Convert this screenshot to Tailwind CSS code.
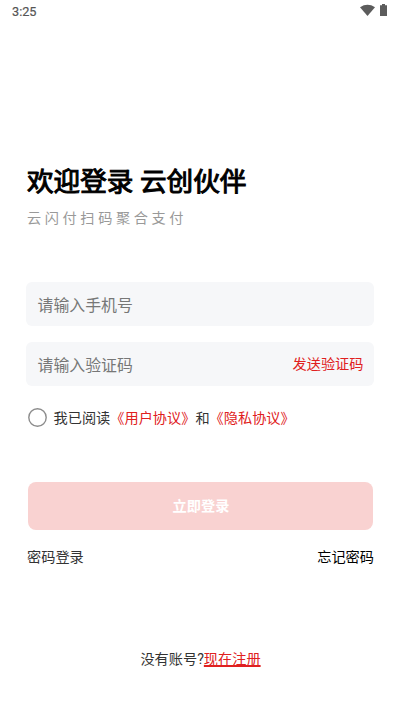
<!DOCTYPE html>
<html lang="zh-CN">
<head>
<meta charset="utf-8">
<title>登录</title>
<script src="https://cdn.jsdelivr.net/npm/@tailwindcss/browser@4"></script>
</head>
<body class="bg-white">
<main class="w-[400px] h-[712px] overflow-hidden flex flex-col bg-white font-['Roboto','Noto_Sans_CJK_SC',sans-serif] text-[14.2px] text-[#333]">
  <header class="h-6 shrink-0 flex justify-between pl-3 pr-[13px]">
    <span class="text-[12.7px] leading-6 text-[#555] [-webkit-text-stroke:0.2px]">3:25</span>
    <span class="flex gap-[5px] pt-1">
      <svg class="w-[15px] h-3" viewBox="0 0 15 12" fill="#5c5c5c"><path d="M0 3.3Q7.5-1.6 15 3.3L7.5 12Z"/></svg>
      <svg class="w-[7px] h-3" viewBox="0 0 7 12" fill="#5c5c5c"><path d="M2 0h3v1.2h2V12H0V1.2h2z"/></svg>
    </span>
  </header>
  <h1 class="mt-[138px] ml-[27px] h-10 leading-10 text-[26.6px] text-black whitespace-nowrap [-webkit-text-stroke:1px]">欢迎登录 云创伙伴</h1>
  <p class="mt-[6px] ml-[27px] h-5 leading-5 tracking-[3.6px] text-[#999]">云闪付扫码聚合支付</p>
  <form class="mt-[54px] pl-[26px] pr-[26px] flex flex-col">
    <label class="h-11 rounded-md bg-[#f6f7f9] pl-[11.5px] pt-[3px] flex items-center text-[15.9px] text-[#777]">请输入手机号</label>
    <div class="mt-4 h-11 rounded-md bg-[#f6f7f9] pl-[11.5px] pr-[10.5px] pt-[3px] flex items-center justify-between text-[15.9px] text-[#777]"><span>请输入验证码</span><span class="pb-[2px] text-[14.2px] text-[#e02020]">发送验证码</span></div>
    <div class="mt-[22px] h-5 pl-0.5 flex items-center whitespace-nowrap"><svg class="w-[19px] h-[19px] mr-[6.5px] -mt-px" viewBox="0 0 19 19" fill="none" stroke="#8c8c8c" stroke-width="1.4"><circle cx="9.5" cy="9.5" r="8.7"/></svg><span class="pt-px">我已阅读<span class="text-[#e02020]">《用户协议》</span>和<span class="text-[#e02020]">《隐私协议》</span></span></div>
    <button class="mt-[54px] ml-[2px] mr-px h-12 rounded-lg bg-[#f9d2d1] pt-px pl-px text-white font-bold">立即登录</button>
    <div class="mt-[17px] h-5 leading-5 pl-px flex justify-between"><span>密码登录</span><span class="text-black">忘记密码</span></div>
  </form>
  <p class="mt-[82px] h-5 leading-5 pl-px text-center">没有账号?<span class="text-[#e02020] underline decoration-[1.5px]">现在注册</span></p>
</main>
</body>
</html>
